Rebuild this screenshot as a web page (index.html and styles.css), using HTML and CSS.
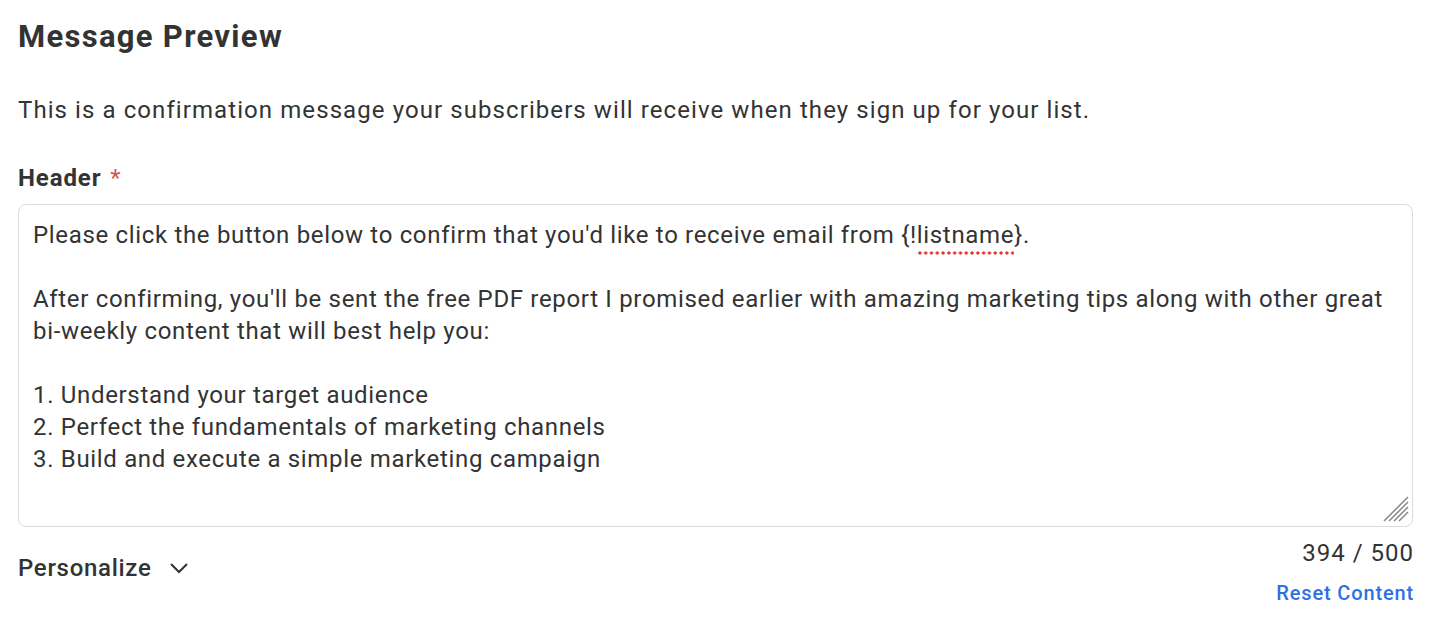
FILE: index.html
```html
<!DOCTYPE html>
<html>
<head>
<meta charset="utf-8">
<link rel="stylesheet" href="styles.css">
</head>
<body>
<div class="page">
  <h1 class="title">Message Preview</h1>
  <p class="desc">This is a confirmation message your subscribers will receive when they sign up for your list.</p>
  <label class="label">Header <span class="req">*</span></label>
  <div class="textarea">
    <div class="line">Please click the button below to confirm that you'd like to receive email from {!<span class="spell">listname</span>}.</div>
    <div class="line">&nbsp;</div>
    <div class="line">After confirming, you'll be sent the free PDF report I promised earlier with amazing marketing tips along with other great bi-weekly content that will best help you:</div>
    <div class="line">&nbsp;</div>
    <div class="line">1. Understand your target audience</div>
    <div class="line">2. Perfect the fundamentals of marketing channels</div>
    <div class="line">3. Build and execute a simple marketing campaign</div>
    <svg class="grip" width="26" height="26" viewBox="0 0 26 26"><path d="M25 1L1 25M25 6L6 25M25 11L11 25M25 16L16 25" stroke="#888" stroke-width="1.5" fill="none"/></svg>
  </div>
  <div class="footer">
    <button class="personalize">Personalize <svg width="20" height="12" viewBox="0 0 20 12"><path d="M2 2l8 8 8-8" stroke="#333" stroke-width="2" fill="none"/></svg></button>
    <div class="right">
      <div class="count">394 / 500</div>
      <a class="reset">Reset Content</a>
    </div>
  </div>
</div>
</body>
</html>
```
FILE: styles.css
```css
* { box-sizing: border-box; }
html, body { margin: 0; background: #fff; }
body { font-family: Roboto, "Liberation Sans", sans-serif; color: #333; }
.page { padding: 18px 33px 0 18px; }
.title { margin: 0; font-size: 31px; font-weight: 700; line-height: 38px; color: #333; letter-spacing: 1.3px; }
.desc { margin: 38px 0 0; font-size: 24px; line-height: 32px; color: #333; letter-spacing: 1.08px; }
.label { display: block; margin-top: 36px; font-size: 24px; font-weight: 700; line-height: 32px; letter-spacing: 0.9px; }
.req { color: #d9534f; font-weight: 400; margin-left: 2px; }
.textarea { position: relative; margin-top: 10px; height: 323px; border: 1px solid #dcdce0; border-radius: 8px; padding: 14px 14px; font-size: 24px; line-height: 32px; color: #333; letter-spacing: 0.67px; }
.spell { padding-bottom: 6px; background: radial-gradient(circle, #e3342c 1.4px, transparent 1.8px) repeat-x left bottom / 5.8px 4px; }
.grip { position: absolute; right: 3px; bottom: 4px; }
.footer { display: flex; justify-content: space-between; align-items: flex-start; margin-top: 11px; }
.personalize { display: flex; align-items: center; gap: 18px; margin-top: 16px; padding: 0; border: 0; background: none; font-family: inherit; font-size: 24px; font-weight: 500; color: #333; letter-spacing: 0.7px; }
.right { display: flex; flex-direction: column; align-items: flex-end; }
.count { font-size: 24px; line-height: 30px; letter-spacing: 1px; margin-right: -1px; }
.reset { margin-top: 13px; font-size: 20px; font-weight: 500; color: #2f6fe4; line-height: 24px; letter-spacing: 0.85px; margin-right: -1px; }
```
